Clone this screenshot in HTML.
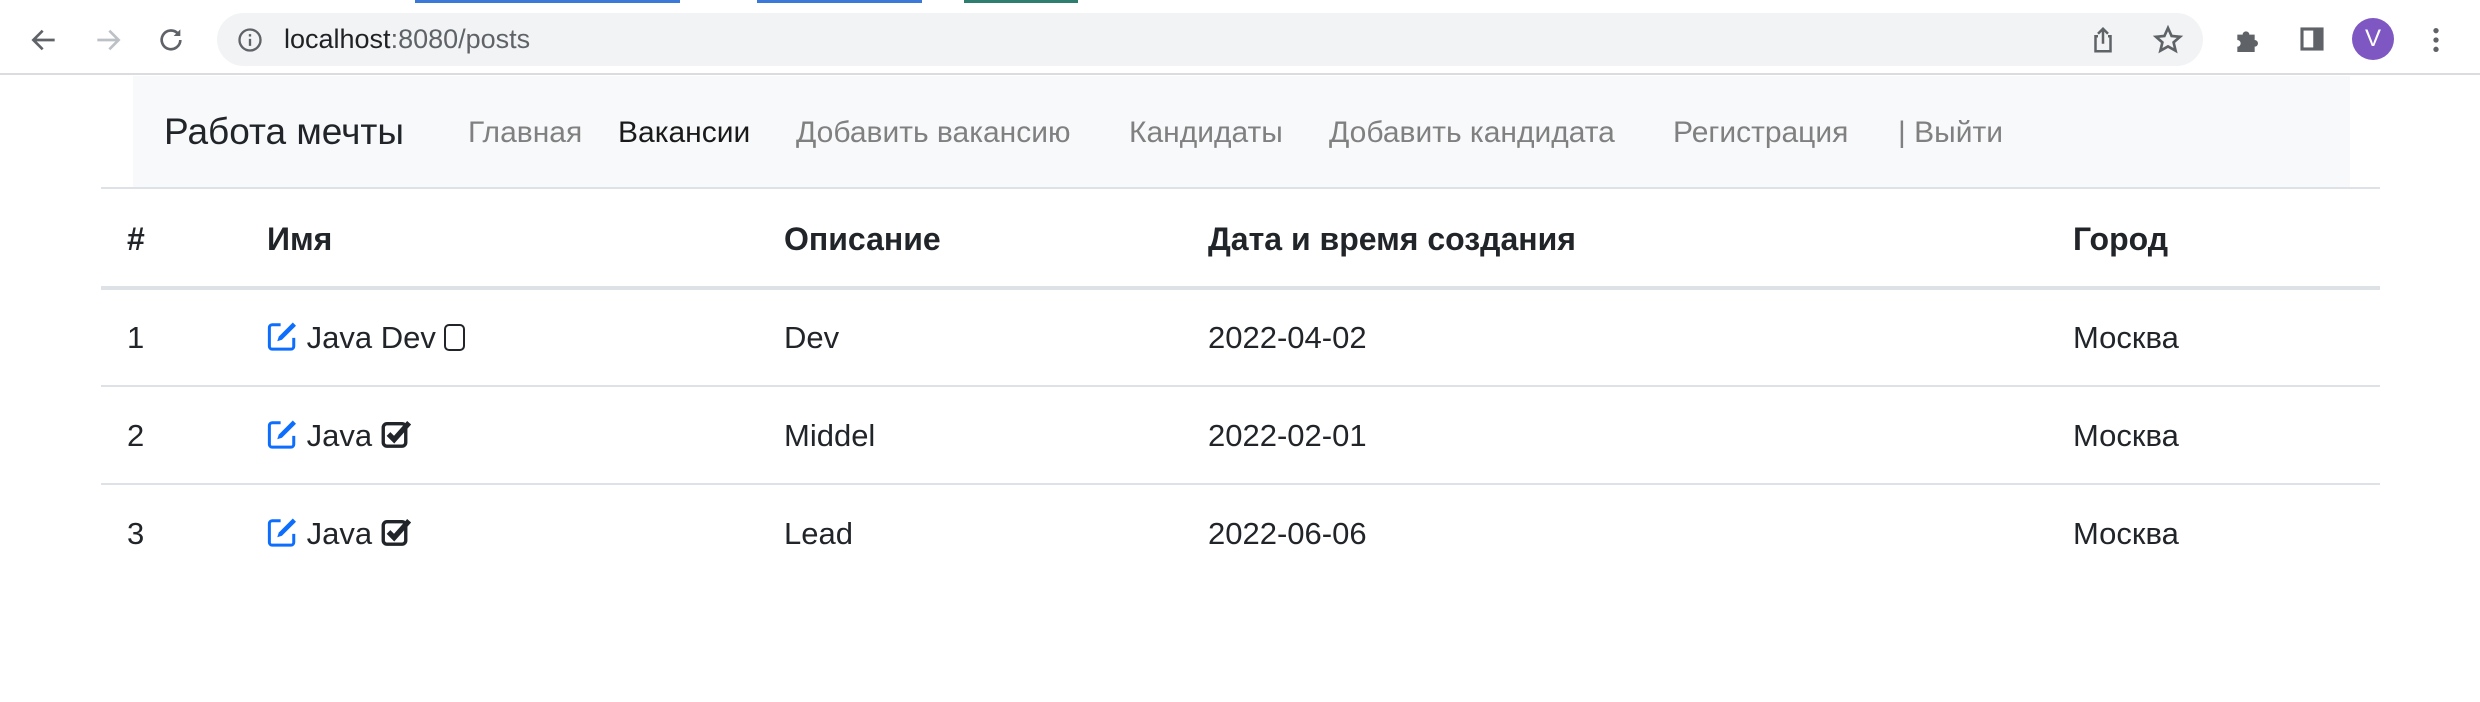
<!DOCTYPE html>
<html><head><meta charset="utf-8"><style>
*{margin:0;padding:0;box-sizing:border-box}
body{width:2480px;height:702px;background:#fff;position:relative;overflow:hidden;font-family:"Liberation Sans",sans-serif;color:#212529}
.a{position:absolute;white-space:nowrap}
.nav{font-size:30px;color:#808080;top:116px}
.th{font-size:32px;font-weight:bold;top:221px}
.td{font-size:31px}
.hr{position:absolute;left:101px;width:2279px;height:2px;background:#dee2e6}
.ic{display:inline-block;vertical-align:-3px}
</style></head><body>
<div class="a" style="left:415px;top:0;width:265px;height:3px;background:#3b78d8"></div>
<div class="a" style="left:757px;top:0;width:165px;height:3px;background:#3b78d8"></div>
<div class="a" style="left:964px;top:0;width:114px;height:3px;background:#2e7d6f"></div>
<div class="a" style="left:0;top:73px;width:2480px;height:2px;background:#dadce0"></div>
<div class="a" style="left:217px;top:13px;width:1986px;height:53px;border-radius:27px;background:#f1f3f4"></div>
<svg class="a" style="left:28px;top:24px" width="32" height="32" viewBox="0 0 24 24"><path d="M20 12H5M11 5l-7 7 7 7" stroke="#5f6368" stroke-width="2" fill="none"/></svg>
<svg class="a" style="left:92px;top:24px" width="32" height="32" viewBox="0 0 24 24"><path d="M4 12h15M13 5l7 7-7 7" stroke="#bdc1c6" stroke-width="2" fill="none"/></svg>
<svg class="a" style="left:155px;top:24px" width="32" height="32" viewBox="0 0 24 24"><path d="M19 12a7 7 0 1 1-2-5" stroke="#5f6368" stroke-width="2" fill="none"/><path d="M19 4v5h-5z" fill="#5f6368"/></svg>
<svg class="a" style="left:236px;top:26px" width="28" height="28" viewBox="0 0 24 24"><circle cx="12" cy="12" r="9" stroke="#5f6368" stroke-width="2" fill="none"/><path d="M12 11v6M12 7v2" stroke="#5f6368" stroke-width="2"/></svg>
<div class="a" style="left:284px;top:24px;font-size:27px;color:#202124">localhost<span style="color:#5f6368">:8080/posts</span></div>
<svg class="a" style="left:2088px;top:24px" width="30" height="32" viewBox="0 0 24 24"><path d="M8 9H6v12h12V9h-2M12 3v12M8 7l4-4 4 4" stroke="#5f6368" stroke-width="2" fill="none"/></svg>
<svg class="a" style="left:2152px;top:24px" width="32" height="32" viewBox="0 0 24 24"><path d="M12 3l2.7 6 6.3.6-4.8 4.2 1.5 6.2L12 16.8 6.3 20l1.5-6.2L3 9.6 9.3 9z" stroke="#5f6368" stroke-width="2" fill="none"/></svg>
<svg class="a" style="left:2232px;top:24px" width="32" height="32" viewBox="0 0 24 24"><path d="M4 8h4a2.5 2.5 0 1 1 5 0h4v4a2.5 2.5 0 1 1 0 5v4H4v-4a2.5 2.5 0 1 0 0-5z" fill="#5f6368"/></svg>
<svg class="a" style="left:2297px;top:24px" width="30" height="30" viewBox="0 0 24 24"><rect x="4" y="4" width="16" height="16" stroke="#5f6368" stroke-width="2.5" fill="none"/><rect x="13" y="4" width="7" height="16" fill="#5f6368"/></svg>
<div class="a" style="left:2352px;top:18px;width:42px;height:42px;border-radius:50%;background:#7e57c2;color:#fff;font-size:24px;text-align:center;line-height:42px">V</div>
<svg class="a" style="left:2426px;top:24px" width="20" height="32" viewBox="0 0 12 24"><circle cx="6" cy="5" r="2" fill="#5f6368"/><circle cx="6" cy="12" r="2" fill="#5f6368"/><circle cx="6" cy="19" r="2" fill="#5f6368"/></svg>
<div class="a" style="left:133px;top:76px;width:2217px;height:111px;background:#f8f9fa"></div>
<div class="a" style="left:164px;top:111px;font-size:37px;color:#212529">Работа мечты</div>
<div class="a nav" style="left:468px">Главная</div>
<div class="a nav" style="left:618px;color:#1a1a1a">Вакансии</div>
<div class="a nav" style="left:796px">Добавить вакансию</div>
<div class="a nav" style="left:1129px">Кандидаты</div>
<div class="a nav" style="left:1329px">Добавить кандидата</div>
<div class="a nav" style="left:1673px">Регистрация</div>
<div class="a nav" style="left:1898px">| Выйти</div>
<div class="hr" style="top:187px"></div>
<div class="a th" style="left:127px">#</div>
<div class="a th" style="left:267px">Имя</div>
<div class="a th" style="left:784px">Описание</div>
<div class="a th" style="left:1208px">Дата и время создания</div>
<div class="a th" style="left:2073px">Город</div>
<div class="hr" style="top:286px;height:4px"></div>
<div class="hr" style="top:385px"></div>
<div class="hr" style="top:483px"></div>
<svg style="display:none"><symbol id="ed" viewBox="0 0 16 16"><path d="M7 2H2.5A1.5 1.5 0 0 0 1 3.5v10A1.5 1.5 0 0 0 2.5 15h10a1.5 1.5 0 0 0 1.5-1.5V9" stroke="#0d6efd" stroke-width="1.6" fill="none"/><path d="M13.5 0.8l1.7 1.7-7.5 7.5-2.5.8.8-2.5z" fill="#0d6efd"/></symbol>
<symbol id="ck" viewBox="0 0 16 16"><rect x="1.2" y="2.5" width="12" height="12" rx="2" stroke="#212529" stroke-width="1.8" fill="none"/><path d="M4 8l3 3 8-9" stroke="#212529" stroke-width="2.8" fill="none"/></symbol></svg>
<div class="a td" style="left:127px;top:320px">1</div>
<div class="a td" style="left:267px;top:320px"><svg class="ic" width="31" height="30"><use href="#ed"/></svg> Java Dev <span class="ic" style="width:21px;height:27px;border:2.5px solid #212529;border-radius:5px"></span></div>
<div class="a td" style="left:784px;top:320px">Dev</div>
<div class="a td" style="left:1208px;top:320px">2022-04-02</div>
<div class="a td" style="left:2073px;top:320px">Москва</div>
<div class="a td" style="left:127px;top:418px">2</div>
<div class="a td" style="left:267px;top:418px"><svg class="ic" width="31" height="30"><use href="#ed"/></svg> Java <svg class="ic" width="30" height="30"><use href="#ck"/></svg></div>
<div class="a td" style="left:784px;top:418px">Middel</div>
<div class="a td" style="left:1208px;top:418px">2022-02-01</div>
<div class="a td" style="left:2073px;top:418px">Москва</div>
<div class="a td" style="left:127px;top:516px">3</div>
<div class="a td" style="left:267px;top:516px"><svg class="ic" width="31" height="30"><use href="#ed"/></svg> Java <svg class="ic" width="30" height="30"><use href="#ck"/></svg></div>
<div class="a td" style="left:784px;top:516px">Lead</div>
<div class="a td" style="left:1208px;top:516px">2022-06-06</div>
<div class="a td" style="left:2073px;top:516px">Москва</div>
</body></html>
